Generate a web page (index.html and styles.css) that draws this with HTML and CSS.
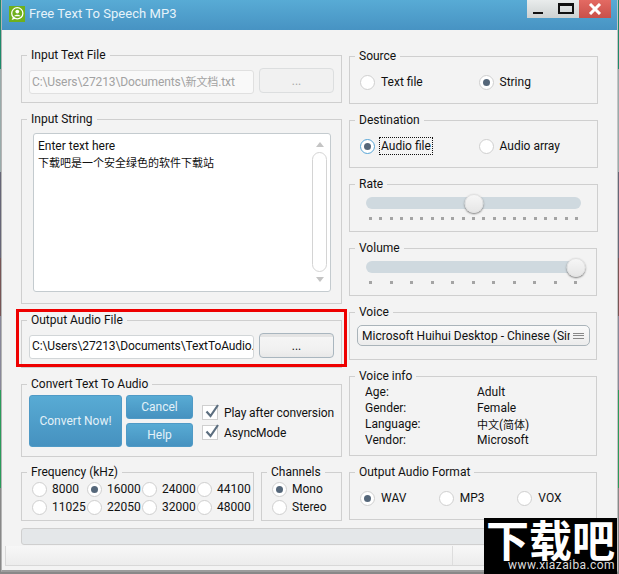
FILE: index.html
```html
<!DOCTYPE html>
<html lang="en">
<head>
<meta charset="utf-8">
<title>Free Text To Speech MP3</title>
<link rel="stylesheet" href="styles.css">
</head>
<body>
<div class="window">
  <header class="titlebar">
    <svg class="app-icon" width="16" height="16" viewBox="0 0 16 16"><rect width="16" height="16" fill="#6fb01c"/><circle cx="8.3" cy="7.3" r="5.6" fill="none" stroke="#fff" stroke-width="1.3"/><path d="M4 11 L2.6 14 L7 12.6Z" fill="#fff"/><circle cx="8.3" cy="5.6" r="1.9" fill="#fff"/><path d="M5.2 10.2 C5.6 8.2 11 8.2 11.4 10.2Z" fill="#fff"/></svg>
    <span class="title">Free Text To Speech MP3</span>
    <div class="winbtns">
      <div class="winbtn-group">
        <span class="win-min"></span>
        <span class="win-max"></span>
      </div>
      <div class="win-close"><svg width="14" height="12" viewBox="0 0 14 12"><path d="M2 1 L12 11 M12 1 L2 11" stroke="#fff" stroke-width="3"/></svg></div>
    </div>
  </header>
  <main class="content">
    <div class="col col-left">
      <section class="group h48">
        <div class="legend">Input Text File</div>
        <div class="file-row">
          <div class="field field-disabled">C:\Users\27213\Documents\<span class="cjk">新文档</span>.txt</div>
          <div class="btn btn-disabled">...</div>
        </div>
      </section>
      <section class="group h185">
        <div class="legend">Input String</div>
        <div class="textarea">
          <div class="textarea-text">Enter text here<br><span class="cjk">下载吧是一个安全绿色的软件下载站</span></div>
          <div class="scroll">
            <span class="arrow-up"></span>
            <span class="scroll-thumb"></span>
            <span class="arrow-down"></span>
          </div>
        </div>
      </section>
      <section class="group h48">
        <div class="legend">Output Audio File</div>
        <div class="file-row">
          <div class="field">C:\Users\27213\Documents\TextToAudio.wav</div>
          <div class="btn">...</div>
        </div>
      </section>
      <section class="group h73">
        <div class="legend">Convert Text To Audio</div>
        <div class="convert-row">
          <div class="blue-btn big">Convert Now!</div>
          <div class="blue-stack">
            <div class="blue-btn">Cancel</div>
            <div class="blue-btn">Help</div>
          </div>
          <div class="checks">
            <div class="check-row"><span class="check"><svg width="17" height="17" viewBox="0 0 17 17"><path d="M3.5 8.5 L7.5 13 L15 2" fill="none" stroke="#5d6f80" stroke-width="2.2"/></svg></span>Play after conversion</div>
            <div class="check-row"><span class="check"><svg width="17" height="17" viewBox="0 0 17 17"><path d="M3.5 8.5 L7.5 13 L15 2" fill="none" stroke="#5d6f80" stroke-width="2.2"/></svg></span>AsyncMode</div>
          </div>
        </div>
      </section>
      <div class="bottom-row">
        <section class="group h49 freq">
          <div class="legend">Frequency (kHz)</div>
          <div class="freq-grid">
            <div class="opt"><span class="radio"></span>8000</div>
            <div class="opt"><span class="radio on"></span>16000</div>
            <div class="opt"><span class="radio"></span>24000</div>
            <div class="opt"><span class="radio"></span>44100</div>
            <div class="opt"><span class="radio"></span>11025</div>
            <div class="opt"><span class="radio"></span>22050</div>
            <div class="opt"><span class="radio"></span>32000</div>
            <div class="opt"><span class="radio"></span>48000</div>
          </div>
        </section>
        <section class="group h49 channels">
          <div class="legend">Channels</div>
          <div class="freq-grid channel-grid">
            <div class="opt"><span class="radio on"></span>Mono</div>
            <div class="opt"><span class="radio"></span>Stereo</div>
          </div>
        </section>
      </div>
    </div>
    <div class="col col-right">
      <section class="group h48">
        <div class="legend">Source</div>
        <div class="radio-row two">
          <div class="opt"><span class="radio"></span>Text file</div>
          <div class="opt"><span class="radio on"></span>String</div>
        </div>
      </section>
      <section class="group h48">
        <div class="legend">Destination</div>
        <div class="radio-row two">
          <div class="opt"><span class="radio on focus"></span><span class="focus-label">Audio file</span></div>
          <div class="opt"><span class="radio"></span>Audio array</div>
        </div>
      </section>
      <section class="group h48">
        <div class="legend">Rate</div>
        <div class="slider">
          <div class="track"><span class="thumb" style="left:50.2%"></span></div>
          <div class="ticks">
            <i></i><i></i><i></i><i></i><i></i><i></i><i></i><i></i><i></i><i></i><i></i><i></i><i></i><i></i><i></i><i></i><i></i><i></i><i></i><i></i><i></i>
          </div>
        </div>
      </section>
      <section class="group h48 narrow">
        <div class="legend">Volume</div>
        <div class="slider">
          <div class="track"><span class="thumb" style="left:98.1%"></span></div>
          <div class="ticks">
            <i></i><i></i><i></i><i></i><i></i><i></i><i></i><i></i><i></i><i></i><i></i>
          </div>
        </div>
      </section>
      <section class="group h48 narrow">
        <div class="legend">Voice</div>
        <div class="combo">
          <span class="combo-text">Microsoft Huihui Desktop - Chinese (Simplified)</span>
          <span class="combo-icon"></span>
        </div>
      </section>
      <section class="group h80 narrow">
        <div class="legend">Voice info</div>
        <div class="info">
          <div class="info-cell">Age:</div><div class="info-cell">Adult</div>
          <div class="info-cell">Gender:</div><div class="info-cell">Female</div>
          <div class="info-cell">Language:</div><div class="info-cell"><span class="cjk">中文</span>(<span class="cjk">简体</span>)</div>
          <div class="info-cell">Vendor:</div><div class="info-cell">Microsoft</div>
        </div>
      </section>
      <section class="group h48 narrow">
        <div class="legend">Output Audio Format</div>
        <div class="radio-row three">
          <div class="opt"><span class="radio on"></span>WAV</div>
          <div class="opt"><span class="radio"></span>MP3</div>
          <div class="opt"><span class="radio"></span>VOX</div>
        </div>
      </section>
    </div>
    <div class="progress"></div>
  </main>
  <footer class="statusbar"><div class="status-main"></div><div class="status-side"></div></footer>
</div>
<div class="red-mark"></div>
<div class="watermark">
  <div class="wm-big">下载吧</div>
  <div class="wm-small">www.xiazaiba.com</div>
</div>
</body>
</html>
```

FILE: styles.css
```css
* { box-sizing: border-box; }
html, body { margin: 0; padding: 0; }
body {
  width: 619px;
  height: 574px;
  overflow: hidden;
  position: relative;
  padding-left: 1px;
  font-family: Roboto, "Noto Sans CJK SC", sans-serif;
  font-size: 12px;
  color: #111;
  background: linear-gradient(#1d8a6a 0 12%, #9aa 12% 30%, #667 30% 45%, #755 45% 55%, #889 55% 68%, #2a9a5a 68% 85%, #888 85% 100%);
}
.cjk { font-size: 11px; font-family: "Noto Sans CJK SC", sans-serif; }
.window {
  width: 617px;
  height: 572px;
  background: #f3f3f3;
  border-right: 1px solid #c4c4c4;
  border-left: 1px solid #b4b4b4;
  border-bottom: 2px solid #9c9c9c;
  display: flex;
  flex-direction: column;
}
.titlebar {
  height: 30px;
  flex: none;
  display: flex;
  background: linear-gradient(#58abd5, #4793c3);
  padding-left: 7px;
}
.app-icon { margin-top: 6px; flex: none; }
.title {
  margin: 5px 0 0 4px;
  font-size: 13px;
  line-height: 18px;
  color: #e6f3fa;
  letter-spacing: 0.05px;
}
.winbtns { margin-left: auto; margin-right: 6px; display: flex; height: 18px; }
.winbtn-group {
  width: 52px;
  position: relative;
  background: linear-gradient(#e9ecec, #cdd1d1);
}
.win-min { position: absolute; left: 6px; top: 12px; width: 10px; height: 2px; background: #111; }
.win-max { position: absolute; left: 31px; top: 3px; width: 16px; height: 11px; border: 2px solid #111; border-top-width: 3px; }
.win-close {
  width: 32px;
  background: linear-gradient(#e36a63, #c9504a);
  display: flex;
  align-items: center;
  justify-content: center;
}
.content {
  flex: 1;
  display: grid;
  grid-template-columns: 321px 249px;
  column-gap: 7px;
  grid-template-rows: auto auto;
  padding: 25px 0 0 19px;
  align-content: start;
}
.col { display: flex; flex-direction: column; gap: 16px; }
.col-right { padding-top: 1px; }
.group {
  border: 1px solid #cfcfcf;
  display: flex;
  flex-direction: column;
}
.h48 { height: 48px; }
.h49 { height: 49px; }
.h73 { height: 73px; }
.h80 { height: 80px; }
.h185 { height: 185px; }
.narrow { width: 248px; }
.legend {
  margin: -8px 0 0 5px;
  padding: 0 4px;
  width: fit-content;
  line-height: 14px;
  height: 14px;
  background: #f3f3f3;
  white-space: nowrap;
}
.file-row {
  display: flex;
  gap: 5px;
  margin: 6px 7px 0;
}
.field {
  width: 225px;
  height: 24px;
  margin-top: 2px;
  border: 1px solid #d2d6d8;
  border-radius: 3px;
  background: #fff;
  padding: 0 0 0 2px;
  line-height: 20px;
  letter-spacing: -0.1px;
  white-space: nowrap;
  overflow: hidden;
}
.field-disabled { color: #a2a2a2; background: #f9f9f9; border-color: #e0e0e0; }
.btn {
  width: 75px;
  height: 25px;
  border: 1px solid #a9b6bf;
  border-radius: 4px;
  background: linear-gradient(#e4e4e4 0 3px, #f5f5f5 3px, #f0f0f0 70%, #e8e8e8);
  text-align: center;
  line-height: 25px;
}
.btn-disabled { border-color: #dcdedf; background: #f1f1f1; color: #a8a8a8; }
.textarea {
  margin: 7px 10px 0 11px;
  height: 159px;
  border: 1px solid #c4cbcf;
  border-radius: 3px;
  background: #fff;
  display: flex;
  justify-content: space-between;
}
.textarea-text { padding: 4px 0 0 4px; line-height: 16px; }
.scroll {
  width: 15px;
  margin: 8px 3px 0 0;
  display: flex;
  flex-direction: column;
  align-items: center;
}
.arrow-up { width: 0; height: 0; border: 4px solid transparent; border-top: 0; border-bottom: 5px solid #c4c4c4; }
.arrow-down { width: 0; height: 0; border: 4px solid transparent; border-bottom: 0; border-top: 5px solid #c4c4c4; margin-top: 5px; }
.scroll-thumb {
  width: 15px;
  height: 120px;
  margin-top: 5px;
  border: 1px solid #d4d4d4;
  border-radius: 8px;
  background: #fff;
}
.convert-row { display: flex; margin: 4px 0 0 7px; }
.blue-btn {
  background: linear-gradient(#58abd4, #4692c0);
  border: 1px solid #4f9ac6;
  border-radius: 3px;
  color: #e3f1f8;
  text-align: center;
  height: 24px;
  line-height: 22px;
  font-size: 12px;
}
.big { width: 93px; height: 52px; line-height: 50px; }
.blue-stack { width: 67px; margin-left: 4px; display: flex; flex-direction: column; gap: 4px; }
.checks { margin-left: 9px; padding-top: 10px; display: flex; flex-direction: column; gap: 4px; }
.check-row { display: flex; height: 16px; line-height: 16px; white-space: nowrap; letter-spacing: -0.1px; }
.check {
  width: 16px;
  height: 15px;
  margin: 0 6px 0 0;
  border: 1px solid #cfcfcf;
  background: #fff;
  flex: none;
}
.check svg { display: block; margin: -3px 0 0 0; overflow: visible; }
.bottom-row { display: flex; gap: 7px; margin-top: -1px; }
.freq { width: 233px; }
.channels { width: 81px; }
.freq-grid {
  display: grid;
  grid-template-columns: repeat(4, 55px);
  grid-auto-rows: 18px;
  margin: 1px 0 0 10px;
}
.channel-grid { grid-template-columns: 60px; }
.opt { display: flex; align-items: center; white-space: nowrap; }
.radio {
  width: 15px;
  height: 15px;
  border: 1px solid #cfcfcf;
  border-radius: 50%;
  background: #fff;
  margin-right: 5px;
  flex: none;
  display: flex;
  align-items: center;
  justify-content: center;
}
.radio.on::after {
  content: "";
  width: 7px;
  height: 7px;
  border-radius: 50%;
  background: #55677a;
}
.radio.focus { border-color: #58a6d6; }
.focus-label { outline: 1px dotted #111; outline-offset: 0; padding: 0 1px; margin-left: -1px; line-height: 16px; }
.radio-row { display: flex; margin: 10px 0 0 10px; height: 18px; }
.radio-row .radio { margin-right: 6px; }
.two .opt { width: 120px; }
.three .opt { width: 79px; }
.slider { margin: 6px 16px 0 16px; }
.track { position: relative; height: 12px; border-radius: 6px; background: #cfd9df; }
.thumb {
  position: absolute;
  top: -3.5px;
  width: 19px;
  height: 19px;
  transform: translateX(-50%);
  border-radius: 50%;
  background: linear-gradient(#f6f6f6, #e6e6e6);
  border: 1px solid #e0e0e0;
  box-shadow: 0 1px 2px #777;
}
.ticks { display: flex; justify-content: space-between; margin: 8px 3px 0 3px; }
.ticks i { width: 3px; height: 3px; background: #a4a4a4; }
.combo {
  margin: 6px 7px 0 7px;
  height: 21px;
  width: 233px;
  border: 1px solid #aab4ba;
  border-radius: 5px;
  background: linear-gradient(#fafafa, #ececec);
  display: flex;
  align-items: center;
  padding: 0 5px 0 4px;
  justify-content: space-between;
}
.combo-text { width: 208px; overflow: hidden; white-space: nowrap; }
.combo-icon { width: 11px; height: 6px; border-top: 1px solid #888; border-bottom: 1px solid #888; position: relative; }
.combo-icon::after { content: ""; position: absolute; left: 0; right: 0; top: 1.5px; height: 1px; background: #888; }
.info {
  display: grid;
  grid-template-columns: 112px 1fr;
  grid-auto-rows: 13px;
  row-gap: 3px;
  margin: 3px 0 0 15px;
}
.info-cell { line-height: 13px; height: 13px; overflow: hidden; }
.progress {
  grid-column: 1 / span 2;
  margin-top: 7px;
  width: 577px;
  height: 17px;
  border: 1px solid #cfcfcf;
  border-radius: 3px;
  background: #e4e7e9;
}
.statusbar {
  flex: none;
  height: 20px;
  margin: 0 0 4px 3px;
  display: flex;
  background: linear-gradient(#f7f7f7, #ececec);
  border-left: 1px solid #d8d8d8;
  border-bottom: 1px solid #d8d8d8;
}
.status-main { width: 447px; border-right: 1px solid #ddd; }
.status-side { flex: 1; }
.red-mark {
  position: absolute;
  left: 16px;
  top: 309px;
  width: 331px;
  height: 58px;
  border: 3px solid #ee0000;
}
.watermark {
  position: absolute;
  left: 484px;
  top: 518px;
  width: 133px;
  height: 56px;
  background: #000;
  color: #fff;
  text-align: center;
  overflow: hidden;
}
.wm-big {
  font-family: "Noto Sans CJK SC", sans-serif;
  font-weight: 700;
  font-size: 43px;
  line-height: 40px;
  height: 40px;
  white-space: nowrap;
}
.wm-small { font-size: 12px; line-height: 15px; letter-spacing: 0.4px; padding-left: 22px; color: #ddd; white-space: nowrap; }
```
